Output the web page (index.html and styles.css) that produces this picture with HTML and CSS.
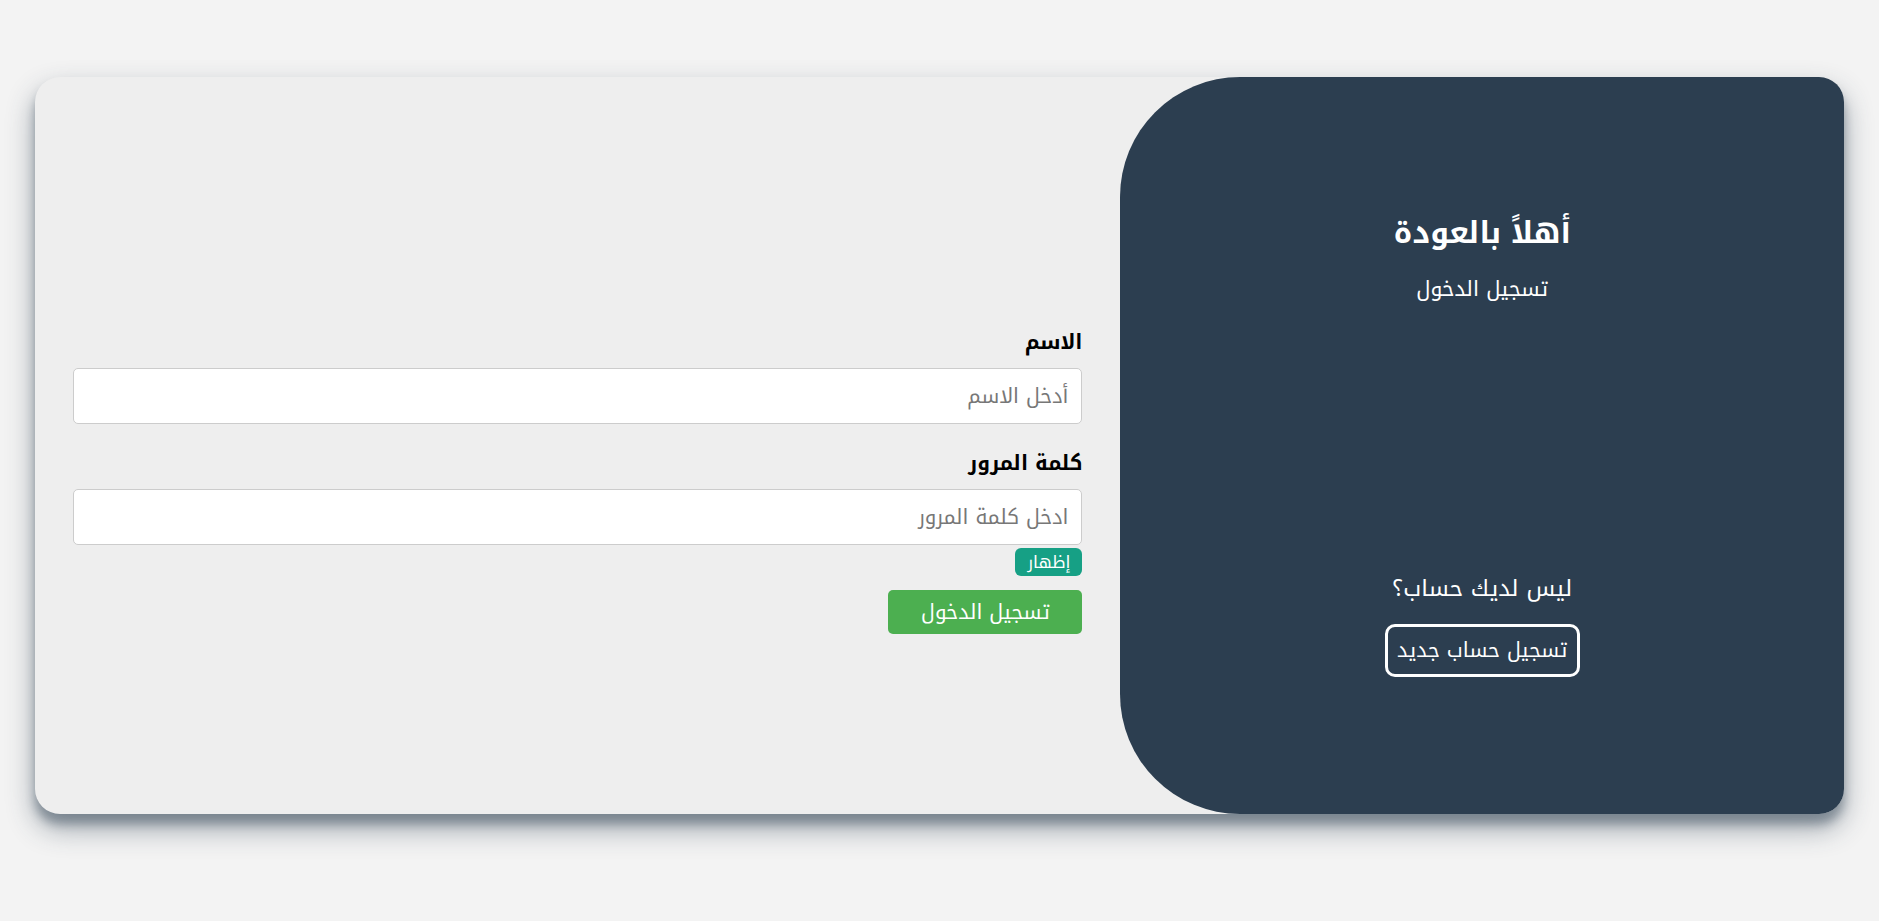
FILE: index.html
```html
<!DOCTYPE html>
<html lang="ar" dir="rtl">
<head>
<meta charset="utf-8">
<title>تسجيل الدخول</title>
<link rel="stylesheet" href="styles.css">
</head>
<body>
<div class="card">
  <section class="panel">
    <h1 class="panel-title">أهلاً بالعودة</h1>
    <p class="panel-sub">تسجيل الدخول</p>
    <p class="panel-question">ليس لديك حساب؟</p>
    <button class="btn-outline" type="button">تسجيل حساب جديد</button>
  </section>
  <form class="form">
    <label class="label" for="name">الاسم</label>
    <input class="input" id="name" type="text" placeholder="أدخل الاسم">
    <label class="label label-second" for="pass">كلمة المرور</label>
    <input class="input" id="pass" type="password" placeholder="ادخل كلمة المرور">
    <button class="btn-show" type="button">إظهار</button>
    <button class="btn-login" type="button">تسجيل الدخول</button>
  </form>
</div>
</body>
</html>
```
FILE: styles.css
```css
* { box-sizing: border-box; }
html, body { margin: 0; padding: 0; }
body {
  background: #f3f3f3;
  font-family: "Noto Kufi Arabic", "Noto Sans Arabic", sans-serif;
  height: 921px;
  padding: 77px 35px 0;
}
.card {
  display: flex;
  height: 737px;
  background: #eeeeee;
  border-radius: 25px;
  overflow: hidden;
  box-shadow: 0 14px 28px rgba(44, 62, 80, 0.45), 0 10px 10px rgba(44, 62, 80, 0.35);
}
.panel {
  width: 40%;
  background: #2c3e50;
  color: #fff;
  border-top-left-radius: 120px;
  border-bottom-left-radius: 120px;
  display: flex;
  flex-direction: column;
  align-items: center;
  padding-top: 137px;
}
.panel-title {
  margin: 0;
  font-size: 30px;
  line-height: 38px;
  font-weight: 700;
}
.panel-sub {
  margin: 20px 0 0;
  font-size: 21px;
  line-height: 34px;
}
.panel-question {
  margin: 265px 0 0;
  font-size: 23px;
  line-height: 36px;
}
.btn-outline {
  margin-top: 17px;
  width: 195px;
  height: 53px;
  padding: 0;
  background: transparent;
  color: #fff;
  border: 3px solid #fff;
  border-radius: 10px;
  font-family: inherit;
  font-size: 20.5px;
  cursor: pointer;
}
.form {
  flex: 1;
  display: flex;
  flex-direction: column;
  align-items: flex-start;
  padding: 249px 38px 0;
}
.label {
  font-size: 20.5px;
  line-height: 34px;
  font-weight: 700;
  color: #000;
}
.label-second { margin-top: 23px; }
.input {
  width: 100%;
  height: 56px;
  margin-top: 8px;
  padding: 0 13px;
  border: 1px solid #cccccc;
  border-radius: 5px;
  background: #fff;
  font-family: inherit;
  font-size: 20.5px;
  color: #333;
}
.input::placeholder { color: #777; }
.btn-show {
  margin-top: 3px;
  width: 67px;
  height: 28px;
  padding: 0;
  background: #16a085;
  color: #fff;
  border: none;
  border-radius: 6px;
  font-family: inherit;
  font-size: 17px;
  line-height: 28px;
  cursor: pointer;
}
.btn-login {
  margin-top: 14px;
  width: 194px;
  height: 44px;
  padding: 0;
  background: #4caf50;
  color: #fff;
  border: none;
  border-radius: 5px;
  font-family: inherit;
  font-size: 20.5px;
  cursor: pointer;
}
```
